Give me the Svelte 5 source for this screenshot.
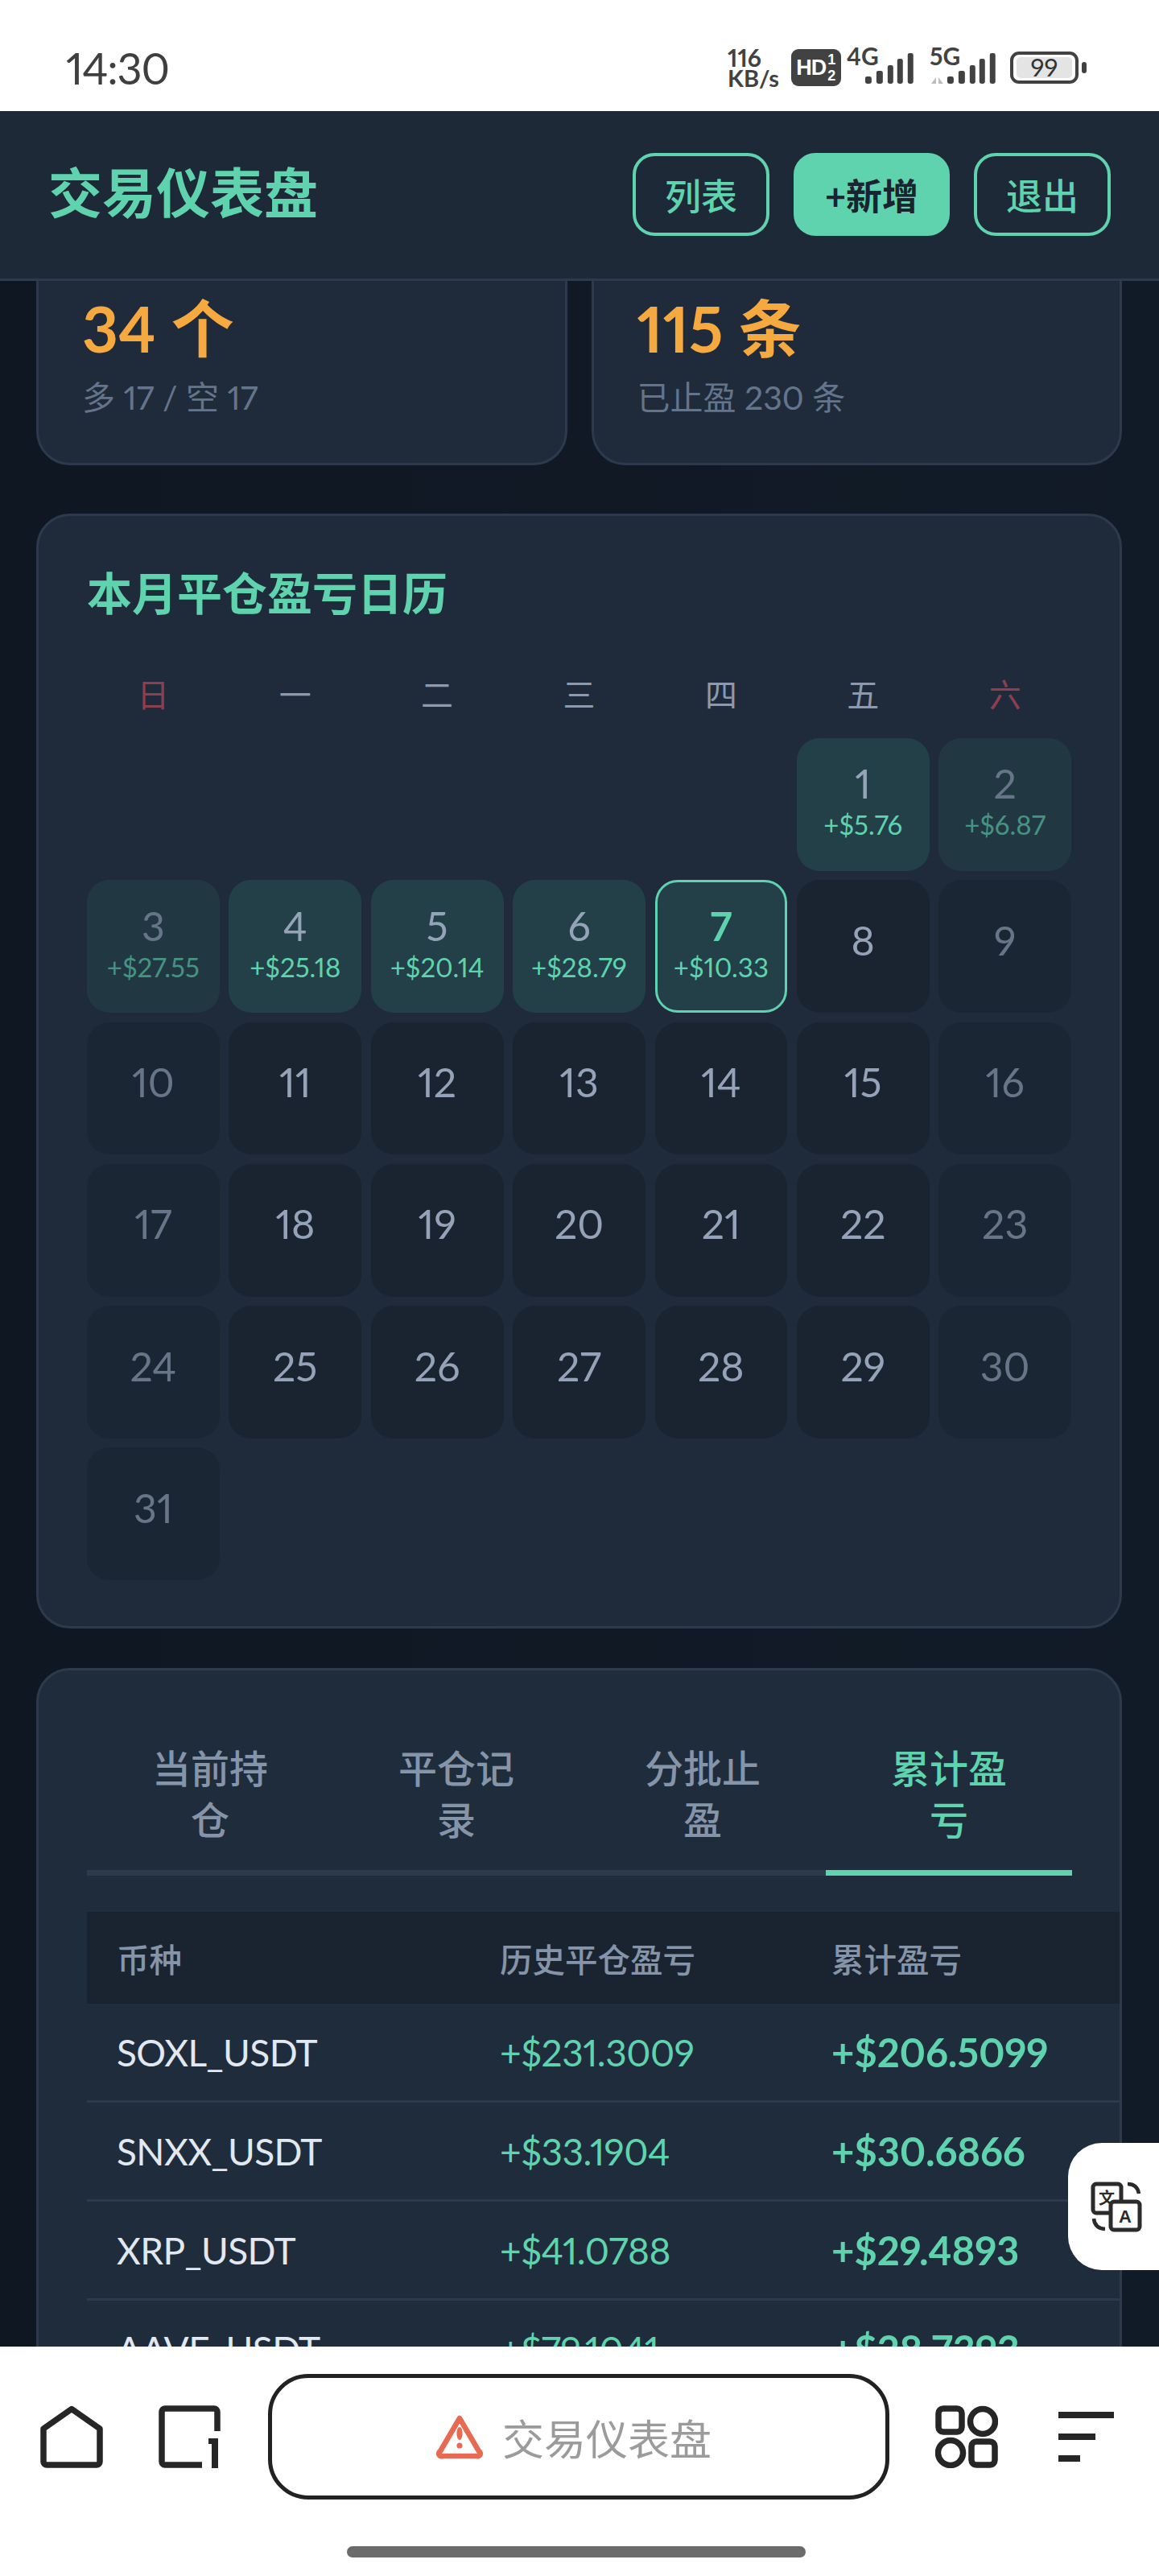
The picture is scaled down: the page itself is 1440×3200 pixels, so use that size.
<script>
  const weekdays = [
    { t: '日', end: true }, { t: '一' }, { t: '二' }, { t: '三' }, { t: '四' }, { t: '五' }, { t: '六', end: true }
  ];
  const pnl = { 1: '+$5.76', 2: '+$6.87', 3: '+$27.55', 4: '+$25.18', 5: '+$20.14', 6: '+$28.79', 7: '+$10.33' };
  const days = Array.from({ length: 31 }, (_, i) => {
    const d = i + 1;
    const dow = (d + 4) % 7;
    return { d, pnl: pnl[d], dim: dow === 0 || dow === 6, today: d === 7 };
  });
  const tabs = ['当前持仓', '平仓记录', '分批止盈', '累计盈亏'];
  const rows = [
    ['SOXL_USDT', '+$231.3009', '+$206.5099'],
    ['SNXX_USDT', '+$33.1904', '+$30.6866'],
    ['XRP_USDT', '+$41.0788', '+$29.4893'],
    ['AAVE_USDT', '+$79.1041', '+$28.7393']
  ];
  const bars = [
    [0, 29, 8, 9], [14, 22, 8, 16], [28, 15, 7, 23], [40, 7, 7, 31], [53, 0, 7, 38]
  ];
</script>

<div class="app">
  <div class="status">
    <div class="time">14:30</div>
    <div class="sicons">
      <div class="speed"><span>116</span><span>KB/s</span></div>
      <div class="hd"><span class="hdt">HD</span><span class="frac"><i>1</i><i>2</i></span></div>
      <svg class="sig" width="84" height="56" viewBox="0 -8 84 56">
        <text x="0" y="23" class="sigt">4G</text>
        <g transform="translate(23,8)">
          {#each bars as b}<rect x={b[0]} y={b[1]} width={b[2]} height={b[3]} rx="2.5" fill="#424242" />{/each}
        </g>
      </svg>
      <svg class="sig sig5" width="84" height="56" viewBox="0 -8 84 56">
        <text x="2" y="23" class="sigt">5G</text>
        <path d="M4 46 L10 38 V46 Z M13 38 L19 46 H13 Z" fill="#bdbdbd" />
        <g transform="translate(24,8)">
          {#each bars as b}<rect x={b[0]} y={b[1]} width={b[2]} height={b[3]} rx="2.5" fill="#424242" />{/each}
        </g>
      </svg>
      <div class="batt"><div class="cell"><div class="fill">99</div></div><div class="nub"></div></div>
    </div>
  </div>

  <header class="top">
    <div class="title">交易仪表盘</div>
    <div class="btns">
      <button class="btn">列表</button>
      <button class="btn solid">+新增</button>
      <button class="btn">退出</button>
    </div>
  </header>

  <main class="page">
    <section class="stats">
      <div class="card stat">
        <div class="num">34 个</div>
        <div class="sub">多 17 / 空 17</div>
      </div>
      <div class="card stat">
        <div class="num">115 条</div>
        <div class="sub">已止盈 230 条</div>
      </div>
    </section>

    <section class="card cal">
      <h2>本月平仓盈亏日历</h2>
      <div class="week">
        {#each weekdays as w}<div class="wd" class:end={w.end}>{w.t}</div>{/each}
      </div>
      <div class="grid">
        {#each Array(5) as _}<div></div>{/each}
        {#each days as c}
          <div class="day" class:has={c.pnl} class:dim={c.dim} class:today={c.today}>
            <span class="dn">{c.d}</span>
            {#if c.pnl}<span class="dp">{c.pnl}</span>{/if}
          </div>
        {/each}
      </div>
    </section>

    <section class="card tbl">
      <div class="tabs">
        {#each tabs as t, i}<div class="tab" class:on={i === 3}>{t}</div>{/each}
      </div>
      <div class="table">
        <div class="tr th"><div>币种</div><div>历史平仓盈亏</div><div>累计盈亏</div></div>
        {#each rows as r}
          <div class="tr">
            <div class="sym">{r[0]}</div>
            <div class="gain">{r[1]}</div>
            <div class="gain bold">{r[2]}</div>
          </div>
        {/each}
      </div>
    </section>
  </main>

  <div class="float">
    <svg width="64" height="64" viewBox="0 0 64 64">
      <path d="M34 4 h-27 a4 4 0 0 0 -4 4 v28 a4 4 0 0 0 4 4 h27 a4 4 0 0 0 4 -4 v-28 a4 4 0 0 0 -4 -4z" fill="none" stroke="#2b2b2b" stroke-width="5" />
      <text x="20" y="29" class="tr-t">文</text>
      <rect x="25" y="26" width="36" height="35" rx="4" fill="#fff" stroke="#2b2b2b" stroke-width="5" />
      <text x="43" y="52" class="tr-a">A</text>
      <path d="M46 4 q12 0 14 12 M4 47 q1 12 14 13" fill="none" stroke="#2b2b2b" stroke-width="4.5" />
    </svg>
  </div>

  <footer class="nav">
    <div class="navrow">
      <svg class="ic" width="78" height="78" viewBox="0 0 78 78">
        <path d="M4 29 L39 4.5 L74 29 V70 a4 4 0 0 1 -4 4 H8 a4 4 0 0 1 -4 -4 Z" fill="none" stroke="#262626" stroke-width="7.5" stroke-linejoin="round" />
      </svg>
      <svg class="ic" width="78" height="78" viewBox="0 0 78 78">
        <path d="M73 32 V8 a4 4 0 0 0 -4 -4 H8 a4 4 0 0 0 -4 4 V70 a4 4 0 0 0 4 4 H54" fill="none" stroke="#262626" stroke-width="7.5" />
        <path d="M62 41 H74 V78 H66 V48 H62 Z" fill="#262626" />
      </svg>
      <div class="addr">
        <svg width="58" height="56" viewBox="0 0 58 56">
          <path d="M29 5 L53 46 a3 3 0 0 1 -3 6 H8 a3 3 0 0 1 -3 -6 Z" fill="none" stroke="#e86a52" stroke-width="6.5" stroke-linejoin="round" />
          <ellipse cx="29" cy="24" rx="3.6" ry="8" fill="#e86a52" />
          <circle cx="29" cy="39" r="3.6" fill="#e86a52" />
        </svg>
        <span>交易仪表盘</span>
      </div>
      <svg class="ic grid-ic" width="78" height="78" viewBox="0 0 78 78">
        <rect x="4" y="4" width="29" height="29" rx="6" fill="none" stroke="#262626" stroke-width="7.5" />
        <circle cx="59" cy="20" r="15.5" fill="none" stroke="#262626" stroke-width="7.5" />
        <circle cx="19" cy="59" r="15.5" fill="none" stroke="#262626" stroke-width="7.5" />
        <rect x="45" y="45" width="29" height="29" rx="6" fill="none" stroke="#262626" stroke-width="7.5" />
      </svg>
      <div class="menu"><i class="m1"></i><i class="m2"></i><i class="m3"></i></div>
    </div>
    <div class="indicator"></div>
  </footer>
</div>

<style>
  :global(body) {
    margin: 0;
    background: #0f1722;
  }
  .app {
    width: 1440px;
    height: 3200px;
    display: flex;
    flex-direction: column;
    overflow: hidden;
    position: relative;
    font-family: Lato, "Noto Sans CJK SC", sans-serif;
    font-variant-numeric: proportional-nums;
    background: #0f1722;
  }
  .status {
    height: 138px;
    flex: none;
    background: #fff;
    display: flex;
    align-items: flex-start;
    justify-content: space-between;
    padding: 0 90px 0 82px;
    box-sizing: border-box;
    color: #3f3f3f;
  }
  .time {
    font-family: Lato, sans-serif;
    font-size: 54px;
    line-height: 54px;
    letter-spacing: -1.2px;
    margin-top: 58px;
    font-weight: 400;
  }
  .sicons {
    display: flex;
    align-items: flex-start;
    margin-top: 58px;
    width: 446px;
  }
  .speed {
    width: 79px;
    display: flex;
    flex-direction: column;
    font-weight: 700;
    font-size: 30px;
    line-height: 26px;
    color: #424242;
    font-family: Lato, sans-serif;
  }
  .speed span:last-child { font-size: 29px; }
  .hd {
    width: 62px;
    height: 46px;
    margin-top: 3px;
    background: #424242;
    border-radius: 9px;
    color: #fff;
    display: flex;
    align-items: center;
    justify-content: center;
    gap: 2px;
    font-family: "Liberation Sans", sans-serif;
    font-weight: 700;
  }
  .hdt { font-size: 27px; letter-spacing: -1px; }
  .frac {
    display: flex;
    flex-direction: column;
    font-size: 18px;
    line-height: 20px;
  }
  .frac i { font-style: normal; }
  .sig { margin-left: 7px; margin-top: -8px; }
  .sig5 { margin-left: 18px; }
  .sigt {
    font-family: Lato, sans-serif;
    font-weight: 700;
    font-size: 30px;
    fill: #424242;
  }
  .batt {
    display: flex;
    align-items: center;
    margin-left: 18px;
    margin-top: 6px;
  }
  .cell {
    width: 85px;
    height: 40px;
    box-sizing: border-box;
    border: 4.5px solid #424242;
    border-radius: 11px;
    padding: 3px 4px;
  }
  .fill {
    height: 100%;
    background: #e4e4e4;
    border-radius: 5px;
    font-family: Lato, sans-serif;
    font-size: 31px;
    line-height: 25px;
    text-align: center;
    color: #333;
  }
  .nub {
    width: 6px;
    height: 14px;
    margin-left: 4px;
    background: #424242;
    border-radius: 3px;
  }
  .top {
    flex: none;
    height: 211px;
    box-sizing: border-box;
    background: #1e2938;
    border-bottom: 3px solid #2c3a4c;
    display: flex;
    align-items: center;
    justify-content: space-between;
    padding: 0 60px 1px 60px;
    position: relative;
    z-index: 2;
  }
  .title {
    font-size: 67px;
    font-weight: 700;
    color: #5fd3ad;
    line-height: 1;
    margin-bottom: 4px;
  }
  .btns {
    display: flex;
    gap: 30px;
  }
  .btn {
    height: 103px;
    width: 170px;
    box-sizing: border-box;
    border: 4px solid #5fd3ad;
    border-radius: 27px;
    background: transparent;
    color: #5fd3ad;
    font-family: inherit;
    font-size: 45px;
    font-weight: 500;
    padding: 0;
  }
  .btn.solid {
    width: 194px;
    background: #5fd3ad;
    color: #1a2431;
    font-weight: 700;
  }
  .page {
    flex: 1;
    min-height: 0;
    overflow: hidden;
    padding: 0 46px 0 45px;
    background: linear-gradient(90deg, #0f1722, #111b27);
  }
  .card {
    box-sizing: border-box;
    background: #1f2b3b;
    border: 3px solid #2d3a4c;
    border-radius: 42px;
  }
  .stats {
    display: grid;
    grid-template-columns: 1fr 1fr;
    gap: 30px;
    margin-top: -40px;
    margin-bottom: 60px;
  }
  .stat {
    height: 269px;
    padding: 48px 54px 0;
  }
  .num {
    font-size: 78px;
    font-weight: 700;
    line-height: 96px;
    color: #f6a93f;
  }
  .sub {
    font-size: 41px;
    line-height: 52px;
    margin-top: 12px;
    color: #64748b;
  }
  .cal {
    height: 1385px;
    padding: 64px 60px 0;
    margin-bottom: 49px;
  }
  h2 {
    margin: 0;
    font-size: 56px;
    line-height: 64px;
    font-weight: 600;
    color: #5fd3ad;
  }
  .week {
    display: grid;
    grid-template-columns: repeat(7, 1fr);
    gap: 12px;
    margin-top: 64px;
    margin-bottom: 24px;
  }
  .wd {
    text-align: center;
    font-size: 40px;
    line-height: 60px;
    color: #8d9aae;
  }
  .wd.end { color: #8d3f50; }
  .grid {
    display: grid;
    grid-template-columns: repeat(7, 1fr);
    gap: 11.5px 11.6px;
  }
  .day {
    aspect-ratio: 1;
    box-sizing: border-box;
    border-radius: 28px;
    background: #1a2431;
    display: flex;
    flex-direction: column;
    align-items: center;
    justify-content: center;
    padding-bottom: 16px;
  }
  .day.has { background: #234049; padding-bottom: 12px; }
  .day.dim { opacity: 0.62; }
  .day.today { border: 3px solid #5fd3ad; }
  .dn {
    font-size: 50px;
    line-height: 62px;
    color: #94a3b8;
    font-weight: 400;
  }
  .dp {
    font-size: 33px;
    line-height: 40px;
    color: #5fd3ad;
    font-weight: 400;
  }
  .today .dn {
    color: #5fd3ad;
    font-weight: 700;
  }
  .tbl {
    padding: 0 0 0 60px;
    height: 1000px;
    background: #1f2c3c;
  }
  .tabs {
    display: grid;
    grid-template-columns: repeat(4, 1fr);
    width: 1224px;
    margin-top: 80px;
    border-bottom: 7px solid #2d3a4c;
  }
  .tab {
    text-align: center;
    font-size: 48px;
    line-height: 64px;
    font-weight: 500;
    color: #8594a8;
    padding: 10px 80px 30px;
    margin-bottom: -7px;
    border-bottom: 7px solid transparent;
  }
  .tab.on {
    color: #5fd3ad;
    border-bottom-color: #5fd3ad;
  }
  .table {
    margin-top: 45px;
  }
  .tr {
    display: grid;
    grid-template-columns: 476px 412px 1fr;
    height: 123px;
    box-sizing: border-box;
    align-items: center;
    border-bottom: 3px solid #2d3a4c;
    font-size: 46px;
    padding-left: 37px;
  }
  .tr > div:first-child { margin-right: 40px; }
  .tr.th {
    height: 114px;
    background: #1a2431;
    border-bottom: none;
    font-size: 40.5px;
    font-weight: 500;
    color: #8594a8;
  }
  .sym {
    color: #e2e8f0;
    font-weight: 400;
    letter-spacing: -0.6px;
  }
  .gain {
    color: #5fd3ad;
    font-weight: 400;
    font-size: 46px;
    letter-spacing: -0.5px;
  }
  .gain.bold {
    font-weight: 700;
    font-size: 49px;
    letter-spacing: -0.2px;
  }
  .float {
    position: absolute;
    right: 0;
    top: 2662px;
    width: 113px;
    height: 158px;
    background: #fff;
    border-radius: 42px 0 0 42px;
    display: flex;
    align-items: center;
    padding-left: 28px;
    box-sizing: border-box;
    z-index: 3;
  }
  .tr-t {
    font-family: "Noto Sans CJK SC", sans-serif;
    font-weight: 700;
    font-size: 20px;
    text-anchor: middle;
    fill: #2b2b2b;
  }
  .tr-a {
    font-family: "Liberation Sans", sans-serif;
    font-weight: 700;
    font-size: 22px;
    text-anchor: middle;
    fill: #2b2b2b;
  }
  .nav {
    flex: none;
    height: 285px;
    box-sizing: border-box;
    background: #fff;
    display: flex;
    flex-direction: column;
    padding-top: 34px;
    position: relative;
    z-index: 2;
  }
  .navrow {
    display: flex;
    align-items: center;
    height: 156px;
    padding-left: 50px;
  }
  .ic { flex: none; }
  .ic + .ic { margin-left: 69px; }
  .addr {
    width: 772px;
    height: 156px;
    margin-left: 58px;
    box-sizing: border-box;
    border: 5px solid #222;
    border-radius: 50px;
    display: flex;
    align-items: center;
    justify-content: center;
    gap: 24px;
    padding-right: 12px;
    color: #9b9b9b;
    font-size: 52px;
  }
  .grid-ic { margin-left: 57px; }
  .menu {
    margin-left: 75px;
    width: 69px;
    display: flex;
    flex-direction: column;
    gap: 19px;
  }
  .menu i {
    display: block;
    height: 8px;
    background: #262626;
  }
  .m2 { width: 46px; }
  .m3 { width: 27px; }
  .indicator {
    width: 570px;
    height: 14px;
    background: #6b6b6b;
    border-radius: 7px;
    margin: 58px 0 0 431px;
  }
</style>
